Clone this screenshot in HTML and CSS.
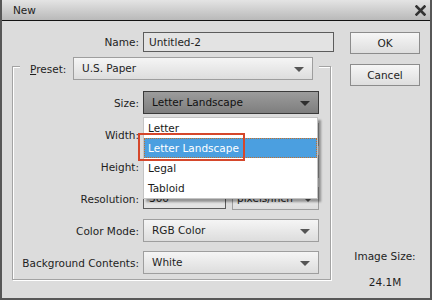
FILE: index.html
```html
<!DOCTYPE html>
<html lang="en">
<head>
  <meta charset="UTF-8">
  <title>New</title>
  <link rel="stylesheet" href="styles.css">
</head>
<body>
  <div class="dialog">
    <div class="titlebar">
      <span class="title">New</span>
      <svg class="close" width="11" height="11" viewBox="0 0 11 11">
        <path d="M1.5 1.5 L9.5 9.5 M9.5 1.5 L1.5 9.5" stroke="#333" stroke-width="2.6" stroke-linecap="square"/>
      </svg>
    </div>

    <div class="content">
      <div class="main">
        <div class="name-row">
          <label class="lbl">Name:</label>
          <div class="textbox name-box">Untitled-2</div>
        </div>

        <div class="group">
          <div class="preset-row">
            <label class="preset-lbl"><u>P</u>reset:</label>
            <div class="select preset-select">U.S. Paper<span class="arrow"></span></div>
          </div>

          <div class="fields">
            <label class="lbl">Size:</label>
            <div class="size-cell">
              <div class="select select-open">Letter Landscape<span class="arrow"></span></div>
              <ul class="menu">
                <li>Letter</li>
                <li class="selected">Letter Landscape</li>
                <li>Legal</li>
                <li>Tabloid</li>
                <div class="mark"></div>
              </ul>
            </div>

            <!-- width / height inputs sit under the open list -->
            <label class="lbl">Width:</label>
            <div class="pair">
              <div class="textbox num-box"></div>
              <div class="select unit-select"><span class="arrow"></span></div>
            </div>

            <label class="lbl">Height:</label>
            <div class="pair">
              <div class="textbox num-box"></div>
              <div class="select unit-select"><span class="arrow"></span></div>
            </div>

            <label class="lbl">Resolution:</label>
            <div class="pair">
              <div class="textbox num-box">300</div>
              <div class="select unit-select">pixels/inch<span class="arrow"></span></div>
            </div>

            <label class="lbl">Color Mode:</label>
            <div class="select">RGB Color<span class="arrow"></span></div>

            <label class="lbl">Background Contents:</label>
            <div class="select">White<span class="arrow"></span></div>
          </div>
        </div>
      </div>

      <div class="side">
        <button class="btn">OK</button>
        <button class="btn">Cancel</button>
        <div class="image-size">
          <div>Image Size:</div>
          <div class="size-value">24.1M</div>
        </div>
      </div>
    </div>
  </div>
</body>
</html>
```

FILE: styles.css
```css
* {
  box-sizing: border-box;
}

body {
  margin: 0;
  font-family: 'DejaVu Sans', sans-serif;
  font-size: 10.5px;
  color: #1e1e1e;
}

.dialog {
  width: 432px;
  height: 300px;
  background: #dcdcdc;
  border: 2px solid #575757;
  border-top: none;
}

.titlebar {
  height: 21px;
  display: flex;
  align-items: center;
  justify-content: space-between;
  padding: 0 4px 0 11px;
  background: linear-gradient(#e4e4e4, #b9b9b9);
  border-bottom: 1px solid #141414;
}

.title {
  color: #222;
}

.content {
  display: flex;
  padding-top: 11px;
}

.main {
  flex: 0 0 348px;
  padding-left: 10px;
}

.name-row {
  display: flex;
  align-items: center;
}

.lbl {
  text-align: right;
  white-space: nowrap;
}

.name-row .lbl {
  width: 127px;
  margin-right: 4px;
}

.textbox {
  height: 22px;
  line-height: 20px;
  padding-left: 5px;
  background: #e3e3e3;
  border: 1px solid #5c5c5c;
}

.name-box {
  width: 191px;
  height: 20px;
  line-height: 18px;
}

.group {
  width: 319px;
  margin-top: 14px;
  padding-bottom: 5px;
  border: 1px solid #a3a3a3;
  box-shadow: inset 1px 1px 0 #fff, 1px 1px 0 #fff;
}

.preset-row {
  display: flex;
  align-items: center;
  justify-content: space-between;
  width: 299px;
  margin: -10px 0 0 7px;
  padding: 0 6px 0 10px;
  background: #dcdcdc;
}

.preset-select {
  width: 240px;
}

.select {
  position: relative;
  height: 23px;
  line-height: 21px;
  padding-left: 8px;
  background: linear-gradient(#f5f5f5, #dddddd);
  border: 1px solid #9e9e9e;
  white-space: nowrap;
  overflow: hidden;
}

.arrow {
  position: absolute;
  right: 8px;
  top: 9px;
  width: 0;
  height: 0;
  border-top: 5px solid #555;
  border-left: 5px solid transparent;
  border-right: 5px solid transparent;
}

.select-open {
  background: linear-gradient(#9c9c9c, #7e7e7e);
  border-color: #3a3a3a;
  color: #111;
}

.select-open .arrow {
  border-top-color: #2e2e2e;
}

.fields {
  display: grid;
  grid-template-columns: 126px 176px;
  column-gap: 4px;
  row-gap: 9px;
  align-items: center;
  margin-top: 11px;
}

.size-cell {
  position: relative;
}

.pair {
  display: flex;
  justify-content: space-between;
}

.num-box {
  width: 83px;
}

.unit-select {
  width: 87px;
  padding-left: 4px;
}

.unit-select .arrow {
  right: 5px;
}

.menu {
  position: absolute;
  top: 26px;
  left: 0;
  width: 175px;
  margin: 0;
  padding: 0;
  list-style: none;
  background: #fff;
  border: 1px solid #c4c4c4;
  box-shadow: 3px 3px 2px rgba(0, 0, 0, 0.35);
  z-index: 2;
}

.menu li {
  height: 20px;
  line-height: 20px;
  padding-left: 4px;
  color: #1a1a1a;
}

.menu .selected {
  background: #4b9fe0;
  color: #fff;
  outline: 1px dotted #c2702c;
  outline-offset: -1px;
}

.mark {
  position: absolute;
  left: -6px;
  top: 15px;
  width: 107px;
  height: 28px;
  border: 2px solid #d5472b;
}

.side {
  width: 70px;
  display: flex;
  flex-direction: column;
  gap: 10px;
}

.btn {
  height: 22px;
  font-family: 'DejaVu Sans', sans-serif;
  font-size: 10.5px;
  color: #1e1e1e;
  background: linear-gradient(#f6f6f6, #dedede);
  border: 1px solid #8c8c8c;
  padding: 0;
}

.image-size {
  margin-top: 154px;
  text-align: center;
  line-height: 13px;
}

.size-value {
  margin-top: 13px;
}
```
